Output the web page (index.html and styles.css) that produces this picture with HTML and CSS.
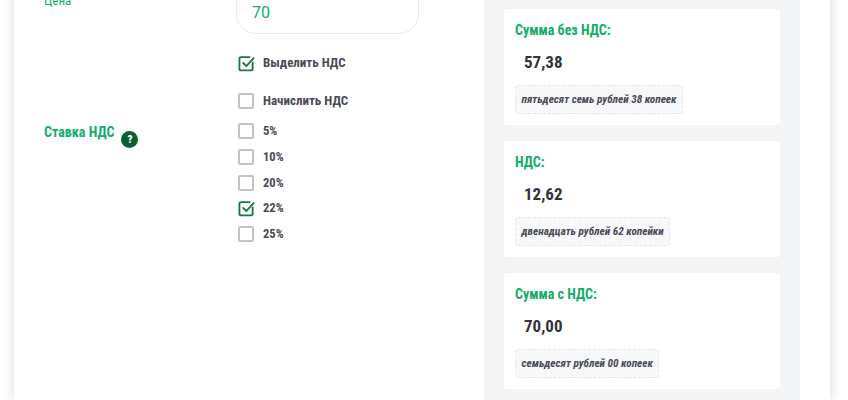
FILE: index.html
```html
<!DOCTYPE html>
<html lang="ru">
<head>
<meta charset="utf-8">
<title>Калькулятор НДС</title>
<link rel="stylesheet" href="styles.css">
</head>
<body>
<main class="sheet">
  <section class="form">
    <div class="row row-price">
      <label class="field-label">Цена</label>
      <div class="input">70</div>
    </div>
    <div class="modes">
      <div class="check big checked-row">
        <svg class="box" viewBox="0 0 18 18"><path class="on" d="M15.5 8v6.5a1.8 1.8 0 0 1-1.8 1.8H3.3a1.8 1.8 0 0 1-1.8-1.8V4.1a1.8 1.8 0 0 1 1.8-1.8h9"/><path class="on" d="M5.5 8.5l3.3 3.2 7.7-8.4"/></svg>
        <span>Выделить НДС</span>
      </div>
      <div class="check big">
        <span class="empty"></span>
        <span>Начислить НДС</span>
      </div>
    </div>
    <div class="row row-rate">
      <div class="rate-label"><span class="field-label">Ставка НДС</span><span class="help">?</span></div>
      <div class="rates">
        <div class="check"><span class="empty"></span><span>5%</span></div>
        <div class="check"><span class="empty"></span><span>10%</span></div>
        <div class="check"><span class="empty"></span><span>20%</span></div>
        <div class="check">
          <svg class="box" viewBox="0 0 18 18"><path class="on" d="M15.5 8v6.5a1.8 1.8 0 0 1-1.8 1.8H3.3a1.8 1.8 0 0 1-1.8-1.8V4.1a1.8 1.8 0 0 1 1.8-1.8h9"/><path class="on" d="M5.5 8.5l3.3 3.2 7.7-8.4"/></svg>
          <span>22%</span>
        </div>
        <div class="check"><span class="empty"></span><span>25%</span></div>
      </div>
    </div>
  </section>
  <aside class="results">
    <div class="card">
      <h3>Сумма без НДС:</h3>
      <div class="value">57,38</div>
      <div class="words">пятьдесят семь рублей 38 копеек</div>
    </div>
    <div class="card">
      <h3>НДС:</h3>
      <div class="value">12,62</div>
      <div class="words">двенадцать рублей 62 копейки</div>
    </div>
    <div class="card">
      <h3>Сумма с НДС:</h3>
      <div class="value">70,00</div>
      <div class="words">семьдесят рублей 00 копеек</div>
    </div>
  </aside>
</main>
</body>
</html>
```
FILE: styles.css
```css
* { box-sizing: border-box; }
html, body { height: 100%; }
body {
  margin: 0;
  height: 400px;
  overflow: hidden;
  background: #fff;
  font-family: "Roboto Condensed", Roboto, "Liberation Sans", sans-serif;
  font-stretch: condensed;
  color: #4a4a55;
}
.sheet {
  display: flex;
  width: 816px;
  height: 460px;
  margin: -60px 0 0 14px;
  background: #fff;
  box-shadow: 0 0 12px rgba(0,0,0,.16);
}
.form {
  width: 470px;
  padding: 40px 0 0 30px;
}
.row { display: flex; }
.row-price { height: 54px; }
.field-label {
  width: 192px;
  color: #12ad68;
  font-size: 14px;
  font-weight: 700;
  line-height: 18px;
}
.row-price .field-label { font-size: 13px; font-weight: 400; padding-top: 12px; }
.input {
  width: 183px;
  height: 54px;
  padding: 22px 0 0 15px;
  border: 1px solid #e9ebee;
  border-radius: 20px;
  background: #fff;
  color: #12ad68;
  font-family: Roboto, sans-serif;
  font-stretch: normal;
  font-size: 16px;
  line-height: 20px;
}
.modes {
  margin: 20px 0 0 194px;
  display: flex;
  flex-direction: column;
  gap: 20px;
}
.rates { margin-left: 2px; }
.check {
  display: flex;
  align-items: center;
  height: 18px;
  gap: 9px;
  font-size: 12.5px;
  font-weight: 700;
  line-height: 18px;
  margin-bottom: 7.75px;
}
.modes .check { margin-bottom: 0; font-size: 13px; }
.empty {
  flex: none;
  width: 16px;
  height: 16px;
  border: 2px solid #c4c4c4;
  border-radius: 2px;
  background: #fff;
}
.box { flex: none; width: 17px; height: 17px; margin-right: -1px; }
.on { fill: none; stroke: #1a7a45; stroke-width: 2; stroke-linecap: round; stroke-linejoin: round; }
.row-rate { margin-top: 12px; }
.rate-label { display: flex; width: 192px; align-items: flex-start; margin-top: 1px; }
.rate-label .field-label { width: auto; }
.help {
  width: 17px;
  height: 17px;
  margin: 8px 0 0 7px;
  border-radius: 50%;
  background: #0e5f31;
  color: #fff;
  font-size: 11px;
  font-weight: 900;
  line-height: 17px;
  text-align: center;
}
.results {
  width: 316px;
  height: 460px;
  display: flex;
  flex-direction: column;
  gap: 16px;
  padding: 69px 20px 0;
  background: #f3f4f6;
}
.card {
  flex: none;
  height: 116px;
  padding: 11px 11px;
  border-radius: 3px;
  background: #fff;
}
.card h3 {
  margin: 0;
  color: #12ad68;
  font-size: 14px;
  font-weight: 700;
  line-height: 20px;
}
.value {
  margin: 10px 0 0 9px;
  color: #33333b;
  font-size: 17px;
  font-weight: 700;
  line-height: 24px;
}
.words {
  display: table;
  height: 29px;
  margin-top: 11px;
  padding: 0 5.5px;
  border: 1px dashed #e3e5e8;
  border-radius: 3px;
  background: #f7f8fa;
  font-size: 11.2px;
  font-style: italic;
  font-weight: 700;
  line-height: 27px;
}
```
